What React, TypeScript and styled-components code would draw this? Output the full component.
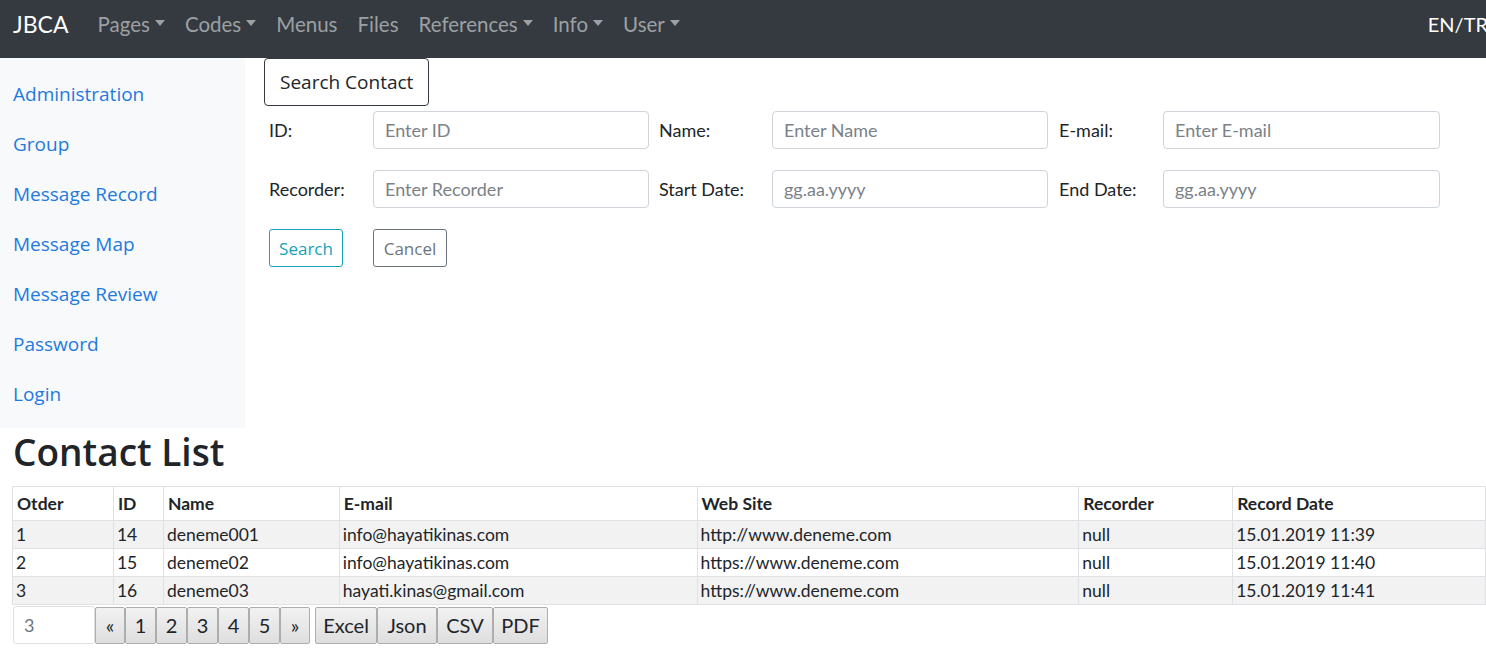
import React from "react";
import styled, { createGlobalStyle } from "styled-components";

const Global = createGlobalStyle`
  html, body { margin: 0; padding: 0; background: #fff; }
  body { font-family: "Open Sans", "Noto Sans", sans-serif; color: #212529; }
  * { box-sizing: border-box; }
`;

const NavBar = styled.nav`
  height: 58px;
  background: #343a40;
  display: flex;
  align-items: flex-start;
  padding: 8px 0 0 13px;
  font-family: Lato, "Open Sans", sans-serif;
`;
const Brand = styled.a`
  color: #fff;
  font-size: 23px;
  line-height: 32px;
  margin-right: 29px;
`;
const NavLinks = styled.div`
  display: flex;
  gap: 20px;
  flex: 1;
`;
const NavLink = styled.a`
  color: #9da0a3;
  font-size: 20.5px;
  line-height: 32px;
  display: flex;
  align-items: center;
`;
const Caret = styled.span`
  display: inline-block;
  margin-left: 5px;
  width: 0;
  height: 0;
  border-left: 5px solid transparent;
  border-right: 5px solid transparent;
  border-top: 6px solid #9da0a3;
  margin-top: -2px;
`;
const Lang = styled.a`
  color: #fff;
  font-size: 20px;
  line-height: 32px;
  margin-right: -2px;
`;

const Top = styled.div`
  display: flex;
  align-items: flex-start;
`;
const Sidebar = styled.aside`
  width: 245px;
  background: #f8f9fa;
  padding: 11px 0 9px 13px;
  display: flex;
  flex-direction: column;
`;
const SideLink = styled.a`
  color: #1f7ae0;
  font-size: 19px;
  line-height: 50px;
  height: 50px;
`;
const Main = styled.main`
  padding-left: 19px;
  display: flex;
  flex-direction: column;
`;
const TitleButton = styled.button`
  align-self: flex-start;
  height: 48px;
  padding: 0 15px;
  border: 1px solid #343a40;
  border-radius: 4px;
  background: #fff;
  color: #212529;
  font-family: "Open Sans", sans-serif;
  font-size: 19px;
`;
const FormRow = styled.div<{ $mt: number }>`
  display: flex;
  align-items: center;
  margin-top: ${(p) => p.$mt}px;
`;
const Label = styled.label<{ $w: number; $pl: number }>`
  width: ${(p) => p.$w}px;
  padding-left: ${(p) => p.$pl}px;
  font-family: Lato, sans-serif;
  font-size: 18px;
  color: #212529;
`;
const Input = styled.input<{ $w: number }>`
  width: ${(p) => p.$w}px;
  height: 38px;
  border: 1px solid #ced4da;
  border-radius: 4px;
  padding: 0 11px;
  font-family: Lato, sans-serif;
  font-size: 18px;
  color: #495057;
  &::placeholder { color: #7a8288; }
`;
const OutlineButton = styled.button<{ $color: string; $ml?: number }>`
  height: 38px;
  width: 74px;
  margin-left: ${(p) => p.$ml ?? 0}px;
  border: 1px solid ${(p) => p.$color};
  color: ${(p) => p.$color};
  background: #fff;
  border-radius: 3px;
  font-family: "Open Sans", sans-serif;
  font-size: 17px;
  padding: 0;
`;

const Heading = styled.h1`
  margin: 0 0 10px 13px;
  font-size: 37px;
  line-height: 48px;
  font-weight: 600;
  color: #212529;
`;
const Table = styled.table`
  margin-left: 12px;
  width: 1474px;
  border-collapse: collapse;
  font-family: Lato, sans-serif;
  font-size: 17.5px;
  color: #212529;
`;
const Th = styled.th<{ $w: number }>`
  width: ${(p) => p.$w}px;
  text-align: left;
  font-weight: 700;
  height: 34px;
  padding: 0 4px;
  border: 1px solid #dee2e6;
`;
const Tr = styled.tr<{ $striped: boolean }>`
  background: ${(p) => (p.$striped ? "#f2f2f2" : "#fff")};
`;
const Td = styled.td`
  height: 28px;
  padding: 0 3px;
  border: 1px solid #dee2e6;
`;

const Pager = styled.div`
  display: flex;
  align-items: center;
  margin: 1px 0 0 13px;
`;
const PageInput = styled.input`
  width: 82px;
  height: 38px;
  border: 1px solid #e0e0e0;
  border-radius: 3px;
  padding: 0 10px;
  font-family: Lato, sans-serif;
  font-size: 18px;
  color: #6c757d;
`;
const PageButton = styled.button<{ $w: number; $ml?: number }>`
  width: ${(p) => p.$w}px;
  height: 37px;
  margin-left: ${(p) => p.$ml ?? 0}px;
  border: 1px solid #adadad;
  border-radius: 2px;
  background: linear-gradient(#f2f2f2, #dedede);
  font-family: Lato, sans-serif;
  font-size: 20px;
  color: #212529;
  padding: 0;
`;

const rows = [
  ["1", "14", "deneme001", "info@hayatikinas.com", "http://www.deneme.com", "null", "15.01.2019 11:39"],
  ["2", "15", "deneme02", "info@hayatikinas.com", "https://www.deneme.com", "null", "15.01.2019 11:40"],
  ["3", "16", "deneme03", "hayati.kinas@gmail.com", "https://www.deneme.com", "null", "15.01.2019 11:41"],
];
const cols: [string, number][] = [
  ["Otder", 101], ["ID", 50], ["Name", 176], ["E-mail", 358], ["Web Site", 382], ["Recorder", 154], ["Record Date", 253],
];

export default function App() {
  return (
    <>
      <Global />
      <NavBar>
        <Brand>JBCA</Brand>
        <NavLinks>
          <NavLink>Pages<Caret /></NavLink>
          <NavLink>Codes<Caret /></NavLink>
          <NavLink>Menus</NavLink>
          <NavLink>Files</NavLink>
          <NavLink>References<Caret /></NavLink>
          <NavLink>Info<Caret /></NavLink>
          <NavLink>User<Caret /></NavLink>
        </NavLinks>
        <Lang>EN/TR</Lang>
      </NavBar>
      <Top>
        <Sidebar>
          {["Administration", "Group", "Message Record", "Message Map", "Message Review", "Password", "Login"].map((s) => (
            <SideLink key={s}>{s}</SideLink>
          ))}
        </Sidebar>
        <Main>
          <TitleButton>Search Contact</TitleButton>
          <FormRow $mt={5}>
            <Label $w={109} $pl={5}>ID:</Label>
            <Input $w={276} placeholder="Enter ID" />
            <Label $w={123} $pl={10}>Name:</Label>
            <Input $w={276} placeholder="Enter Name" />
            <Label $w={115} $pl={11}>E-mail:</Label>
            <Input $w={277} placeholder="Enter E-mail" />
          </FormRow>
          <FormRow $mt={21}>
            <Label $w={109} $pl={5}>Recorder:</Label>
            <Input $w={276} placeholder="Enter Recorder" />
            <Label $w={123} $pl={10}>Start Date:</Label>
            <Input $w={276} placeholder="gg.aa.yyyy" />
            <Label $w={115} $pl={11}>End Date:</Label>
            <Input $w={277} placeholder="gg.aa.yyyy" />
          </FormRow>
          <FormRow $mt={21}>
            <OutlineButton $color="#17a2b8" $ml={5}>Search</OutlineButton>
            <OutlineButton $color="#6c757d" $ml={30}>Cancel</OutlineButton>
          </FormRow>
        </Main>
      </Top>
      <Heading>Contact List</Heading>
      <Table>
        <thead>
          <tr>
            {cols.map(([c, w]) => (
              <Th key={c} $w={w}>{c}</Th>
            ))}
          </tr>
        </thead>
        <tbody>
          {rows.map((r, i) => (
            <Tr key={i} $striped={i % 2 === 0}>
              {r.map((c, j) => (
                <Td key={j}>{c}</Td>
              ))}
            </Tr>
          ))}
        </tbody>
      </Table>
      <Pager>
        <PageInput defaultValue="3" />
        <PageButton $w={30}>«</PageButton>
        <PageButton $w={31}>1</PageButton>
        <PageButton $w={31}>2</PageButton>
        <PageButton $w={31}>3</PageButton>
        <PageButton $w={31}>4</PageButton>
        <PageButton $w={31}>5</PageButton>
        <PageButton $w={30}>»</PageButton>
        <PageButton $w={62} $ml={5}>Excel</PageButton>
        <PageButton $w={60}>Json</PageButton>
        <PageButton $w={56}>CSV</PageButton>
        <PageButton $w={55}>PDF</PageButton>
      </Pager>
    </>
  );
}
